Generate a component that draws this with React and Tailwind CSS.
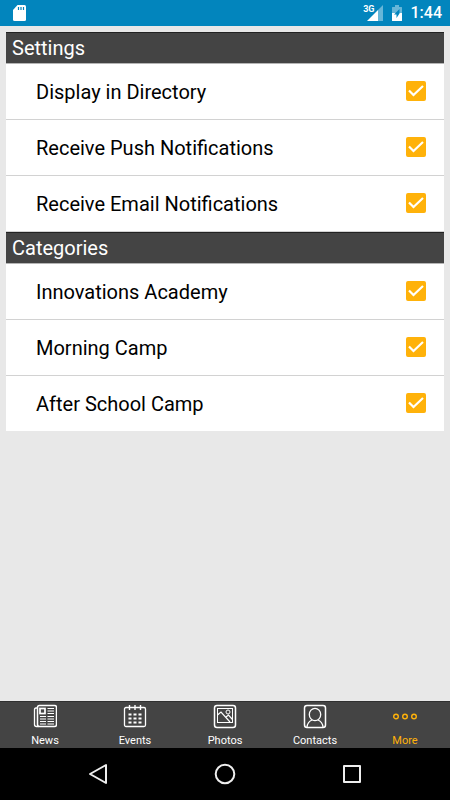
import { useState } from 'react';

const sections = [
  {
    title: 'Settings',
    items: ['Display in Directory', 'Receive Push Notifications', 'Receive Email Notifications'],
  },
  {
    title: 'Categories',
    items: ['Innovations Academy', 'Morning Camp', 'After School Camp'],
  },
];

function StatusBar() {
  return (
    <header className="flex h-[26px] shrink-0 items-center bg-[#0285bd] pr-2 pl-3 text-white">
      <svg className="h-4 w-4" viewBox="0 0 16 16" aria-hidden="true">
        <path d="M5.500 0H12.500Q14 0 14 1.500V14.500Q14 16 12.500 16H2.500Q1 16 1 14.500V5Z" fill="#fff" />
        <path d="M6.500 2V5M9 2V5M11.500 2V5" stroke="#0285bd" strokeWidth="1.2" />
      </svg>
      <div className="ml-auto flex items-center">
        <span className="mb-2 text-[9px] leading-3 font-bold">3G</span>
        <svg className="-ml-2 h-4 w-4" viewBox="0 0 16 16" aria-hidden="true">
          <path d="M0 16L16 0V16Z" fill="#fff" />
          <path d="M11 0H16V16H11Z" fill="#0285bd" />
          <path d="M11 5L16 0V16H11Z" fill="#67b6d8" />
        </svg>
        <svg className="ml-2 h-4 w-3" viewBox="0 0 12 16" aria-hidden="true">
          <path d="M4 0H8V2H10.500Q11 2 11 2.500V8H1V2.500Q1 2 1.500 2H4Z" fill="#67b6d8" />
          <path d="M1 8H11V15.500Q11 16 10.500 16H1.500Q1 16 1 15.500Z" fill="#fff" />
          <path d="M8.500 4V8.500L5.500 13V9.500H3Z" fill="#0285bd" />
        </svg>
        <time className="ml-2 text-base leading-6 font-medium">1:44</time>
      </div>
    </header>
  );
}

function SettingRow({ label }) {
  const [checked, setChecked] = useState(true);
  return (
    <li className="border-b border-[#d2d2d2] bg-white group-last:last:border-b-0">
      <label className="flex h-[55px] items-center justify-between pr-[18px] pl-[30px]">
        <span className="text-xl text-black">{label}</span>
        <span className="mb-[2px] grid h-5 w-5 shrink-0">
          <input
            type="checkbox"
            checked={checked}
            onChange={(e) => setChecked(e.target.checked)}
            className="peer col-start-1 row-start-1 h-5 w-5 appearance-none rounded-[2px] border-2 border-[#ffb20a] checked:bg-[#ffb20a]"
          />
          <svg
            className="pointer-events-none invisible col-start-1 row-start-1 h-5 w-5 peer-checked:visible"
            viewBox="0 0 20 20"
            fill="none"
            stroke="#fff"
            strokeWidth="2.2"
            aria-hidden="true"
          >
            <path d="M3 9.500L7.500 14L17 5" />
          </svg>
        </span>
      </label>
    </li>
  );
}

function NewsIcon() {
  return (
    <>
      <rect x="4.500" y="1.500" width="19" height="21" rx="2" strokeWidth="1.500" />
      <path d="M4.500 4H3Q1.500 4 1.500 6V20.500Q1.500 22.500 3.500 22.500H6" strokeWidth="1.300" />
      <rect x="7" y="4.500" width="5" height="5" strokeWidth="1.700" />
      <path d="M14.500 4.500H21M14.500 7H21M14.500 9.500H21M7 12.500H13M14.500 12.500H21M7 15H13M14.500 15H21M7 17.500H13M14.500 17.500H21M7 20H13M14.500 20H21" strokeWidth="1" />
    </>
  );
}

function EventsIcon() {
  return (
    <>
      <rect x="1.500" y="3.500" width="21" height="19" rx="1.500" strokeWidth="1.300" />
      <path d="M6.500 1V6M12 1V6M17.500 1V6" strokeWidth="1.400" />
      <path d="M5.500 10.500H18.500M5.500 14.500H18.500M5.500 18.500H18.500" strokeWidth="2" strokeDasharray="3 2" />
    </>
  );
}

function PhotosIcon() {
  return (
    <>
      <rect x="1.500" y="1.500" width="21" height="22" rx="2.500" strokeWidth="1.500" />
      <rect x="4.500" y="4.500" width="15" height="14" strokeWidth="1" />
      <circle cx="15" cy="8" r="2" strokeWidth="1" />
      <path d="M4.500 11L8 8L17 18M13 13L15.500 11L19.500 15.500" strokeWidth="1.200" />
    </>
  );
}

function ContactsIcon() {
  return (
    <>
      <rect x="1.500" y="1.500" width="21" height="22" rx="2.500" strokeWidth="1.500" />
      <ellipse cx="12" cy="10.500" rx="5.700" ry="6.200" strokeWidth="1.300" />
      <path d="M4 23Q4.500 18 9 16M20 23Q19.500 18 15 16" strokeWidth="1.300" />
    </>
  );
}

function MoreIcon() {
  return (
    <>
      <circle cx="3" cy="12.500" r="2.300" strokeWidth="1.400" />
      <circle cx="12" cy="12.500" r="2.300" strokeWidth="1.400" />
      <circle cx="21" cy="12.500" r="2.300" strokeWidth="1.400" />
    </>
  );
}

const tabs = [
  { label: 'News', Icon: NewsIcon },
  { label: 'Events', Icon: EventsIcon },
  { label: 'Photos', Icon: PhotosIcon },
  { label: 'Contacts', Icon: ContactsIcon },
  { label: 'More', Icon: MoreIcon, active: true },
];

function TabBar() {
  return (
    <nav className="grid h-[47px] shrink-0 grid-cols-5 border-t border-[#303030] bg-[#444]">
      {tabs.map(({ label, Icon, active }) => (
        <button
          key={label}
          type="button"
          aria-current={active ? 'page' : undefined}
          className={`flex flex-col items-center gap-[6px] pt-[2px] ${active ? 'text-[#ffb20a]' : 'text-white'}`}
        >
          <svg className="h-[25px] w-6" viewBox="0 0 24 25" fill="none" stroke="currentColor" aria-hidden="true">
            <Icon />
          </svg>
          <span className="text-[11px] leading-3">{label}</span>
        </button>
      ))}
    </nav>
  );
}

function SystemBar() {
  return (
    <div className="flex h-[52px] shrink-0 items-center justify-center gap-[103px] bg-black">
      <button type="button" aria-label="Back">
        <svg className="h-6 w-6" viewBox="0 0 24 24" fill="none" stroke="#eee" strokeWidth="2" strokeLinejoin="round" aria-hidden="true">
          <path d="M20 3V21L4 12Z" />
        </svg>
      </button>
      <button type="button" aria-label="Home">
        <svg className="h-6 w-6" viewBox="0 0 24 24" fill="none" stroke="#eee" strokeWidth="2" aria-hidden="true">
          <circle cx="12" cy="12" r="9.300" />
        </svg>
      </button>
      <button type="button" aria-label="Overview">
        <svg className="h-6 w-6" viewBox="0 0 24 24" fill="none" stroke="#eee" strokeWidth="2" strokeLinejoin="round" aria-hidden="true">
          <rect x="4" y="4" width="16" height="16" />
        </svg>
      </button>
    </div>
  );
}

export default function App() {
  return (
    <div className="flex min-h-screen flex-col bg-[#e8e8e8] font-['Roboto',sans-serif]">
      <StatusBar />
      <main className="flex-1 px-[6px] pt-[6px]">
        {sections.map(({ title, items }) => (
          <section key={title} className="group">
            <h2 className="flex h-8 items-center border-t border-b border-t-[#222] border-b-[#b5b5b5] bg-[#444] px-[6px] text-xl text-white">
              {title}
            </h2>
            <ul>
              {items.map((label) => (
                <SettingRow key={label} label={label} />
              ))}
            </ul>
          </section>
        ))}
      </main>
      <TabBar />
      <SystemBar />
    </div>
  );
}
